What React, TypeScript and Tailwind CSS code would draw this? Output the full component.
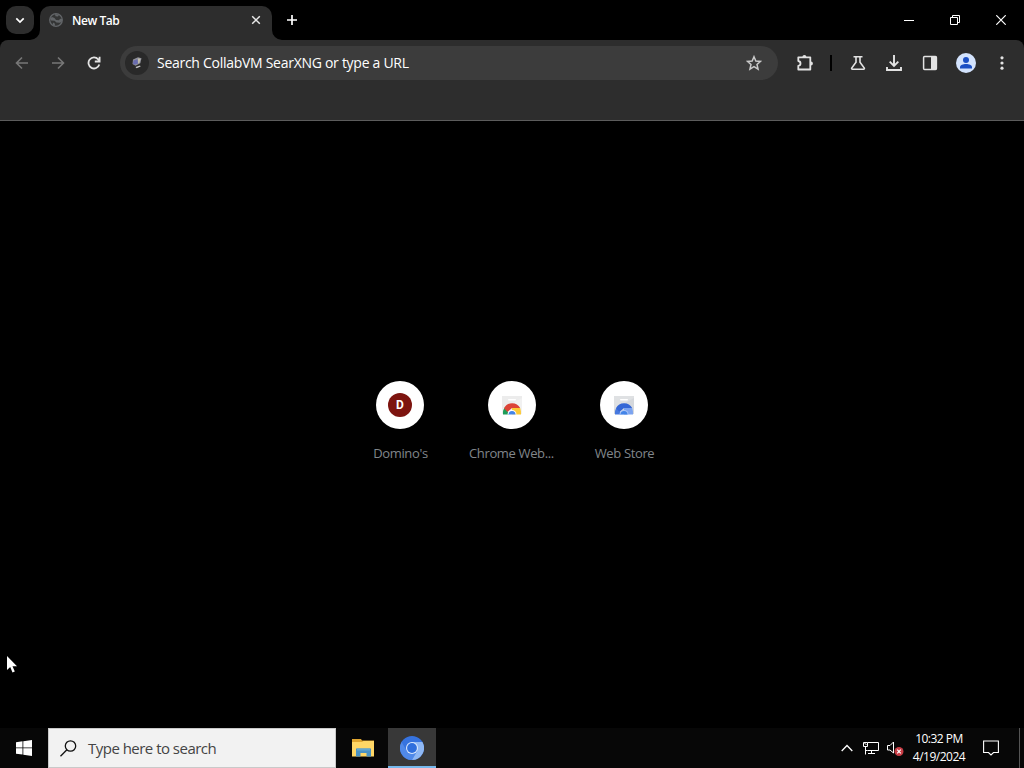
import type { ReactNode } from "react"

const uiFont = "font-['Open_Sans','Noto_Sans',sans-serif]"

function GlobeIcon() {
  return (
    <svg width="14" height="14" viewBox="0 0 14 14">
      <circle cx="7" cy="7" r="6.300" fill="#343535" stroke="#626568" strokeWidth="1.300" />
      <path d="M1 5.500 3 4l2.500 1L7 7l3 .2 1-1.500 2 .3v2.500l-2 1.200-3.500-.2-2-1.700-3.500-.3zM6 1l4 .8-1 1.700-2.500-.3zM4 9.500l2 1.200-.3 2.300-2-1z" fill="#626568" />
    </svg>
  )
}

function SearchEngineIcon() {
  return (
    <svg width="14" height="14" viewBox="0 0 14 14">
      <path d="m3 3.500 5-2.300 3.500 1-1.200 5-4.800 2.600L2.500 8z" fill="#8f9098" />
      <path d="m3.500 4.500 4-1.200.5 4.100-3.400 1.400-1.600-1z" fill="#696caf" />
      <path d="m8 2.500 2.500.3-1 3.800-1.400.8z" fill="#c1bdab" />
      <path d="m5.500 11 4.500-1.500.6 1-4 1.700z" fill="#c8c8c8" />
    </svg>
  )
}

function ToolbarSlot({ children }: { children: ReactNode }) {
  return <button className="flex h-9 w-9 shrink-0 items-center justify-center">{children}</button>
}

function TabStrip() {
  return (
    <div className="flex h-10 items-start bg-black pt-1.5">
      <button className="ml-1.5 flex h-7 w-7 items-center justify-center rounded-[10px] bg-[#2d2d2d]">
        <svg width="10" height="7" viewBox="0 0 10 7" fill="none" stroke="#fff" strokeWidth="1.700">
          <path d="m1.300 1.400 3.700 3.700 3.700-3.700" />
        </svg>
      </button>
      <div className="relative ml-1.5 flex h-[34px] w-[232px] items-center rounded-t-[10px] bg-[#2d2d2d] pb-1.5 pl-[9px] pr-[11px]">
        <svg className="absolute -left-2.5 bottom-0" width="10" height="10" viewBox="0 0 10 10">
          <path d="M10 0v10H0A10 10 0 0 0 10 0" fill="#2d2d2d" />
        </svg>
        <svg className="absolute -right-2.5 bottom-0" width="10" height="10" viewBox="0 0 10 10">
          <path d="M0 0v10h10A10 10 0 0 1 0 0" fill="#2d2d2d" />
        </svg>
        <GlobeIcon />
        <span className="ml-[9px] flex-1 pt-px text-[12px] leading-4 font-semibold tracking-[-0.45px] text-white">New Tab</span>
        <svg width="10" height="10" viewBox="0 0 10 10" stroke="#e8e8e8" strokeWidth="1.500">
          <path d="m1.200 1.200 7.600 7.600m0-7.600L1.200 8.800" />
        </svg>
      </div>
      <button className="ml-1.5 flex h-7 w-7 items-center justify-center">
        <svg width="12" height="12" viewBox="0 0 12 12" stroke="#fff" strokeWidth="1.700">
          <path d="M6 1v10M1 6h10" />
        </svg>
      </button>
      <div className="-mt-1.5 ml-auto flex h-10">
        <button className="flex w-[46px] items-center justify-center">
          <svg width="10" height="10" viewBox="0 0 10 10" stroke="#fff">
            <path d="M0 5.500h10" />
          </svg>
        </button>
        <button className="flex w-[46px] items-center justify-center">
          <svg width="10" height="10" viewBox="0 0 10 10" fill="none" stroke="#fff">
            <path d="M.5 2.500h7v7h-7zM2.500 2.500v-2h7v7h-2" />
          </svg>
        </button>
        <button className="flex w-[46px] items-center justify-center">
          <svg width="10" height="10" viewBox="0 0 10 10" stroke="#fff" strokeWidth="1.200">
            <path d="m.3.3 9.400 9.400m0-9.400L.3 9.700" />
          </svg>
        </button>
      </div>
    </div>
  )
}

function Toolbar() {
  return (
    <div className="bg-black">
      <div className="h-[81px] rounded-t-lg border-b border-[#5c5c5c] bg-[#2d2d2d]">
        <div className="flex h-[46px] items-center px-1">
          <ToolbarSlot>
            <svg width="14" height="14" viewBox="0 0 14 14" fill="none" stroke="#777" strokeWidth="1.600">
              <path d="M13 7H2M7 1.500 1.500 7 7 12.500" />
            </svg>
          </ToolbarSlot>
          <ToolbarSlot>
            <svg width="14" height="14" viewBox="0 0 14 14" fill="none" stroke="#777" strokeWidth="1.600">
              <path d="M1 7h11M7 1.500 12.500 7 7 12.500" />
            </svg>
          </ToolbarSlot>
          <ToolbarSlot>
            <svg width="14" height="14" viewBox="0 0 14 14" fill="none" stroke="#e3e3e3" strokeWidth="1.800">
              <path d="M12.300 8.500A5.500 5.500 0 1 1 11.200 3.400l1.300 1.400M12.600.7v4.800H7.800" />
            </svg>
          </ToolbarSlot>
          <div className="ml-2 flex h-[34px] w-[658px] items-center rounded-full bg-[#3c3c3c] pl-[5px] pr-4">
            <span className="flex h-6 w-6 items-center justify-center rounded-full bg-[#292929]">
              <SearchEngineIcon />
            </span>
            <span className={`ml-2 flex-1 text-[14px] leading-5 tracking-[-0.28px] text-white ${uiFont}`}>
              Search CollabVM SearXNG or type a URL
            </span>
            <svg width="16" height="16" viewBox="0 0 16 16" fill="none" stroke="#c9c9c9" strokeWidth="1.500">
              <path d="m8 1.700 1.850 4.300 4.650.4-3.500 3.100 1.050 4.600L8 11.700l-4.050 2.400L5 9.500 1.500 6.400l4.650-.4z" />
            </svg>
          </div>
          <div className="ml-2 flex">
            <ToolbarSlot>
              <svg className="ml-0.5" width="18" height="18" viewBox="0 0 18 18">
                <path d="M2.300 3.300h12v12.200h-12v-3.700c1.500-.3 2.200-1.200 2.200-2.400S3.800 7.300 2.300 7z" fill="none" stroke="#e3e3e3" strokeWidth="1.800" strokeLinejoin="round" />
                <path d="M6.400 3a2 2 0 0 1 4 0zM14.900 7.400a2 2 0 0 1 0 4z" fill="#e3e3e3" />
              </svg>
            </ToolbarSlot>
          </div>
          <div className="mx-2 h-4 w-0.5 bg-black" />
          <ToolbarSlot>
            <svg width="16" height="16" viewBox="0 0 16 16" fill="none" stroke="#e3e3e3" strokeWidth="1.600">
              <path d="M3.500 1.800h9M6 2v5.200L1.700 13q-.4 1.200.8 1.200h11q1.200 0 .8-1.200L10 7.200V2" />
            </svg>
          </ToolbarSlot>
          <ToolbarSlot>
            <svg width="16" height="18" viewBox="0 0 16 18" fill="none" stroke="#e3e3e3" strokeWidth="1.900">
              <path d="M8 1v11M3.700 7.700 8 12l4.300-4.300M1 13v3h14v-3" />
            </svg>
          </ToolbarSlot>
          <ToolbarSlot>
            <svg width="16" height="16" viewBox="0 0 16 16">
              <rect x="1.600" y="1.600" width="12.800" height="12.800" rx="1" fill="none" stroke="#e3e3e3" strokeWidth="1.500" />
              <path d="M9 1.500h5.500v13H9z" fill="#e3e3e3" />
            </svg>
          </ToolbarSlot>
          <ToolbarSlot>
            <svg width="20" height="20" viewBox="0 0 20 20">
              <circle cx="10" cy="10" r="10" fill="#d3e3fd" />
              <circle cx="10" cy="7" r="3" fill="#1b4fc4" />
              <path d="M4 15.500v-1.400c0-2 3-3.100 6-3.100s6 1.100 6 3.100v1.400z" fill="#1b4fc4" />
            </svg>
          </ToolbarSlot>
          <ToolbarSlot>
            <svg width="4" height="16" viewBox="0 0 4 16" fill="#e3e3e3">
              <circle cx="2" cy="2.800" r="1.600" />
              <circle cx="2" cy="8" r="1.600" />
              <circle cx="2" cy="13.200" r="1.600" />
            </svg>
          </ToolbarSlot>
        </div>
      </div>
    </div>
  )
}

function WebStoreIcon({ mono }: { mono?: boolean }) {
  const red = mono ? "#3567d6" : "#dc4437"
  const green = mono ? "#4779df" : "#1e9c57"
  const yellow = mono ? "#7ba3f0" : "#fcc934"
  return (
    <svg width="20" height="20" viewBox="0 0 20 20">
      <path d="M0 1h20v18H0z" fill={mono ? "#dfe1e3" : "#ececec"} />
      <path d="m0 14 20-11v16H0z" fill={mono ? "#d5d8dc" : "#f1f1f1"} />
      <rect x="6" y="4" width="8" height="1.500" rx=".75" fill="#fff" />
      <path d="M1 19.500a9 9 0 0 1 2.500-7.700L7 19.500z" fill={green} />
      <path d="M2 13.300A9.200 9.200 0 0 1 18.200 13H10l-4.500 4z" fill={red} />
      <path d="M10 13h8.200q.9 2.500.8 6.500h-9z" fill={yellow} />
      <path d="M5.500 19.500a4.500 4.500 0 0 1 9 0z" fill={mono ? "#a9c5f7" : "#fff"} />
      <path d="M6.500 19.500a3.500 3.500 0 0 1 7 0z" fill="#4384e7" />
    </svg>
  )
}

const shortcuts = [
  {
    title: "Domino's",
    icon: (
      <span className="flex h-6 w-6 items-center justify-center rounded-full bg-[#7d140f] font-['Roboto',sans-serif] text-[12px] leading-none font-bold text-white">
        D
      </span>
    ),
  },
  { title: "Chrome Web...", icon: <WebStoreIcon /> },
  { title: "Web Store", icon: <WebStoreIcon mono /> },
]

function NewTabPage() {
  return (
    <main className="flex flex-1 justify-center bg-black pt-[244px]">
      <div className="flex h-28">
        {shortcuts.map((shortcut) => (
          <div key={shortcut.title} className="flex w-28 flex-col items-center pt-4">
            <div className="flex h-12 w-12 items-center justify-center rounded-full bg-white">{shortcut.icon}</div>
            <div className={`mt-[15px] w-[88px] truncate pl-px text-[13px] leading-[18px] tracking-[-0.36px] text-[#80868b] ${shortcut.title.length > 10 ? "text-left" : "text-center"} ${uiFont}`}>
              {shortcut.title}
            </div>
          </div>
        ))}
      </div>
    </main>
  )
}

function Taskbar() {
  return (
    <footer className="flex h-10 bg-[#070707]">
      <button className="flex w-12 items-center justify-center">
        <svg width="16" height="16" viewBox="0 0 16 16" fill="#fff">
          <path d="M0 2.200 6.500 1.300v6.200H0zM7.300 1.200 16 0v7.500H7.300zM0 8.300h6.500v6.300L0 13.700zM7.300 8.300H16V16l-8.700-1.200z" />
        </svg>
      </button>
      <div className="flex w-72 items-center border border-[#c9c9c9] bg-[#f2f2f2] pl-[11px]">
        <svg width="17" height="17" viewBox="0 0 17 17" fill="none" stroke="#111" strokeWidth="1.300">
          <circle cx="10.500" cy="6" r="5.200" />
          <path d="M6.900 9.700.5 16.300" />
        </svg>
        <span className={`ml-[11px] text-[15px] leading-5 tracking-[-0.52px] text-[#444] ${uiFont}`}>Type here to search</span>
      </div>
      <button className="flex w-[52px] items-center justify-center pl-0.5">
        <svg width="22" height="20" viewBox="0 0 22 20">
          <path d="M0 1h9l1 1.500h12V5H0z" fill="#e0a630" />
          <path d="M0 4h10l1.500-1H22v15.500H0z" fill="#ffd766" />
          <path d="M4 10.500h15v8h-4.500V15h-6v3.500H4z" fill="#4a92c4" />
          <path d="M5 10.500h13v2H5z" fill="#64a8d0" />
        </svg>
      </button>
      <button className="flex w-12 items-center justify-center border-b-2 border-[#76b9ed] bg-[#383838] pt-0.5">
        <svg width="24" height="24" viewBox="0 0 24 24">
          <circle cx="12" cy="12" r="12" fill="#3673df" />
          <path d="M1.600 6A12 12 0 0 0 12 24l5.200-9L12 18l-5.200-3z" fill="#5089e8" />
          <path d="M12 6h10.400A12 12 0 0 1 12 24l5.200-9z" fill="#8fb8f4" />
          <circle cx="12" cy="12" r="6" fill="#dce9fc" />
          <circle cx="12" cy="12" r="4.900" fill="#2f6fdd" />
        </svg>
      </button>
      <div className="ml-auto flex items-center">
        <svg className="mr-2.5" width="12" height="8" viewBox="0 0 12 8" fill="none" stroke="#fff" strokeWidth="1.300">
          <path d="M.7 7 6 1.500 11.300 7" />
        </svg>
        <svg className="mr-2" width="16" height="14" viewBox="0 0 16 14" fill="none" stroke="#fff">
          <path d="M4.500 1.500h11v8h-11M.5 1.500h4v4h-4zM2.500 5.500v8M5 12.500h7M8.500 9.500v3M2.500 9.500h2" />
          <path d="M1.500 2.500h1M2.500 3.500h1" />
        </svg>
        <svg width="17" height="15" viewBox="0 0 17 15">
          <path d="M.5 4.500H3l3.500-3.500v11L3 9H.5z" fill="none" stroke="#fff" />
          <circle cx="12" cy="10.500" r="4.500" fill="#c83d46" />
          <path d="m10.200 8.700 3.600 3.600m0-3.600-3.600 3.600" stroke="#fff" strokeWidth="1.200" />
        </svg>
        <div className={`ml-[7px] w-14 text-center text-[12px] leading-[18px] tracking-[-0.5px] whitespace-nowrap text-white ${uiFont}`}>
          <div>10:32 PM</div>
          <div>4/19/2024</div>
        </div>
        <svg className="ml-4 mr-5" width="16" height="16" viewBox="0 0 16 16" fill="none" stroke="#fff" strokeWidth="1.100">
          <path d="M.6 1h14.800v11.500H10.500L8 15l-2.500-2.500H.6z" />
        </svg>
        <div className="mr-1 h-10 w-px bg-[#555]" />
      </div>
    </footer>
  )
}

// Standard Windows arrow, floats over the page
function MousePointer() {
  return (
    <svg className="absolute left-[7px] top-[656px]" width="11" height="17" viewBox="0 0 11 17" fill="#fff">
      <path d="M0 0v14l3.200-3.100 2.300 5.500 2.300-1-2.300-5.100H10z" />
    </svg>
  )
}

export default function App() {
  return (
    <div className={`relative flex h-screen w-screen flex-col overflow-hidden bg-black ${uiFont}`}>
      <TabStrip />
      <Toolbar />
      <NewTabPage />
      <Taskbar />
      <MousePointer />
    </div>
  )
}
